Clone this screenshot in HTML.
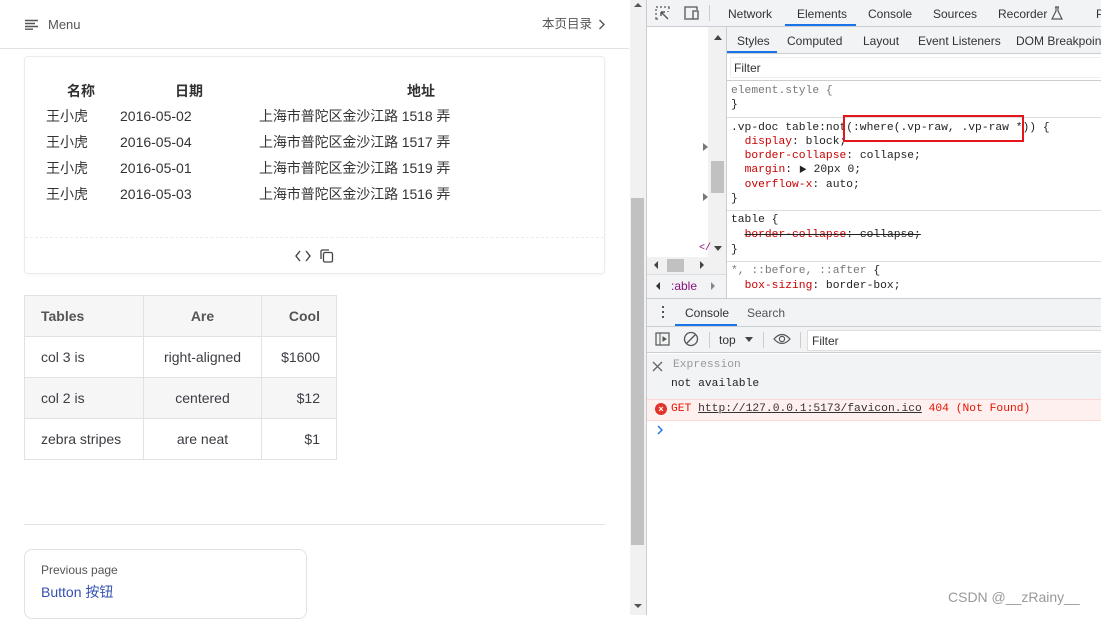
<!DOCTYPE html>
<html><head><meta charset="utf-8"><style>
*{box-sizing:border-box;margin:0;padding:0}
body{width:1101px;height:615px;overflow:hidden;background:#fff;position:relative;font-family:"Liberation Sans","Noto Sans CJK SC",sans-serif;color:#3c3c43}
.a{position:absolute;white-space:nowrap}
.m{font-family:"Liberation Mono","Noto Sans CJK SC",monospace;font-size:11.3px}
.dt{font-family:"Liberation Sans",sans-serif;font-size:12px;color:#333}
td{border:1px solid #e2e2e3;font-size:14px;padding:0 16px;height:41px}
.g{background:#f6f6f7}
</style></head><body>
<!-- header -->
<svg class="a" style="left:25px;top:19px" width="13" height="11"><path d="M0 1.5H13M0 4.5H10M0 7.5H13M0 10.2H8" stroke="#555" stroke-width="1.4"/></svg>
<div class="a" style="left:48px;top:17px;font-size:13px;color:#555">Menu</div>
<div class="a" style="left:542px;top:16px;font-size:12.5px;color:#555;line-height:16px">本页目录</div>
<svg class="a" style="left:598px;top:19px" width="8" height="12"><path d="M1.5 1L6 5.5 1.5 10" stroke="#555" stroke-width="1.4" fill="none"/></svg>
<div class="a" style="left:0;top:48px;width:629px;height:1px;background:#e2e2e3"></div>
<!-- card -->
<div class="a" style="left:24px;top:56px;width:581px;height:218px;border:1px solid #ebebeb;border-radius:4px;box-shadow:0 1px 2px rgba(0,0,0,.04)"></div>
<div class="a" style="left:25px;top:237px;width:579px;border-top:1px dashed #ececec"></div>
<div class="a" style="left:67px;top:81px;font-size:14px;font-weight:bold;color:#303133">名称</div>
<div class="a" style="left:175px;top:81px;font-size:14px;font-weight:bold;color:#303133">日期</div>
<div class="a" style="left:407px;top:81px;font-size:14px;font-weight:bold;color:#303133">地址</div>
<div class="a" style="left:46px;top:103px;font-size:14px;line-height:26px;color:#333">王小虎<br>王小虎<br>王小虎<br>王小虎</div>
<div class="a" style="left:120px;top:103px;font-size:14px;line-height:26px;color:#333">2016-05-02<br>2016-05-04<br>2016-05-01<br>2016-05-03</div>
<div class="a" style="left:259px;top:103px;font-size:14px;line-height:26px;color:#333;letter-spacing:-0.1px">上海市普陀区金沙江路 1518 弄<br>上海市普陀区金沙江路 1517 弄<br>上海市普陀区金沙江路 1519 弄<br>上海市普陀区金沙江路 1516 弄</div>
<svg class="a" style="left:295px;top:250px" width="16" height="12"><path d="M5 1L1 6 5 11M11 1L15 6 11 11" stroke="#444" stroke-width="1.4" fill="none"/></svg>
<svg class="a" style="left:320px;top:249px" width="14" height="14"><rect x="3.5" y="3.5" width="9" height="9.5" rx="1.5" stroke="#444" stroke-width="1.3" fill="none"/><path d="M1 10V2.5Q1 1 2.5 1H9" stroke="#444" stroke-width="1.3" fill="none"/></svg>
<!-- md table -->
<table class="a" style="left:24px;top:295px;border-collapse:collapse">
<tr class="g"><td style="width:119px;font-weight:600;color:#555">Tables</td><td style="width:118px;text-align:center;font-weight:600;color:#555">Are</td><td style="width:75px;text-align:right;font-weight:600;color:#555">Cool</td></tr>
<tr><td>col 3 is</td><td style="text-align:center">right-aligned</td><td style="text-align:right">$1600</td></tr>
<tr class="g"><td>col 2 is</td><td style="text-align:center">centered</td><td style="text-align:right">$12</td></tr>
<tr><td>zebra stripes</td><td style="text-align:center">are neat</td><td style="text-align:right">$1</td></tr>
</table>
<div class="a" style="left:24px;top:524px;width:581px;height:1px;background:#e2e2e3"></div>
<div class="a" style="left:24px;top:549px;width:283px;height:70px;border:1px solid #e2e2e3;border-radius:8px"></div>
<div class="a" style="left:41px;top:563px;font-size:12px;color:#555">Previous page</div>
<div class="a" style="left:41px;top:582px;font-size:14px;color:#3451b2">Button 按钮</div>
<!-- page scrollbar -->
<div class="a" style="left:630px;top:0;width:16px;height:615px;background:#f1f1f1"></div>
<div class="a" style="left:631px;top:198px;width:13px;height:347px;background:#c1c1c1"></div>
<div class="a" style="left:634px;top:3px;width:0;height:0;border:4px solid transparent;border-bottom:4px solid #555;border-top:0"></div>
<div class="a" style="left:634px;top:604px;width:0;height:0;border:4px solid transparent;border-top:4px solid #555;border-bottom:0"></div>
<!-- devtools -->
<div class="a" style="left:646px;top:0;width:1px;height:615px;background:#ccc"></div>
<div class="a" style="left:647px;top:0;width:454px;height:27px;background:#f1f3f4;border-bottom:1px solid #cacdd1"></div>
<svg class="a" style="left:655px;top:6px" width="16" height="15"><path d="M1 1h2M5 1h2M9 1h2M13 1h1v2M1 3v2M1 7v2M1 11v2h2M13 5v1" stroke="#555" stroke-width="1.2" fill="none"/><path d="M6 6l7 7M6 6h4M6 6v4" stroke="#555" stroke-width="1.4" fill="none"/></svg>
<svg class="a" style="left:683px;top:6px" width="17" height="14"><path d="M1 13h9M2 12V1h12v3" stroke="#555" stroke-width="1.3" fill="none"/><rect x="10" y="5" width="5" height="8" stroke="#555" stroke-width="1.3" fill="none"/></svg>
<div class="a" style="left:709px;top:5px;width:1px;height:16px;background:#ccc"></div>
<div class="a dt" style="left:728px;top:7px">Network</div>
<div class="a dt" style="left:797px;top:7px">Elements</div>
<div class="a" style="left:785px;top:24px;width:71px;height:2px;background:#1a73e8"></div>
<div class="a dt" style="left:868px;top:7px">Console</div>
<div class="a dt" style="left:933px;top:7px">Sources</div>
<div class="a dt" style="left:998px;top:7px">Recorder</div>
<svg class="a" style="left:1051px;top:6px" width="12" height="14"><path d="M4 1h4M5 1v4L1 13h10L7 5V1" stroke="#555" stroke-width="1.2" fill="none"/></svg>
<div class="a dt" style="left:1096px;top:7px">P</div>
<!-- elements left -->
<div class="a" style="left:708px;top:27px;width:18px;height:230px;background:#f1f1f1"></div>
<div class="a" style="left:711px;top:161px;width:13px;height:32px;background:#c1c1c1"></div>
<div class="a" style="left:714px;top:35px;border:4px solid transparent;border-bottom:5px solid #444;border-top:0"></div>
<div class="a" style="left:714px;top:246px;border:4px solid transparent;border-top:5px solid #444;border-bottom:0"></div>
<div class="a" style="left:703px;top:143px;border:4px solid transparent;border-left:5px solid #777;border-right:0"></div>
<div class="a" style="left:703px;top:193px;border:4px solid transparent;border-left:5px solid #777;border-right:0"></div>
<div class="a m" style="left:699px;top:243px;color:#881280;font-size:10px">&lt;/</div>
<div class="a" style="left:647px;top:257px;width:80px;height:17px;background:#f1f1f1"></div>
<div class="a" style="left:667px;top:259px;width:17px;height:13px;background:#c1c1c1"></div>
<div class="a" style="left:654px;top:261px;border:4px solid transparent;border-right:4px solid #444;border-left:0"></div>
<div class="a" style="left:700px;top:261px;border:4px solid transparent;border-left:4px solid #444;border-right:0"></div>
<div class="a" style="left:647px;top:274px;width:80px;height:24px;background:#f1f3f4;border-top:1px solid #ddd"></div>
<div class="a" style="left:656px;top:282px;border:4px solid transparent;border-right:4px solid #333;border-left:0"></div>
<div class="a" style="left:671px;top:279px;font-size:12px;color:#881280">:able</div>
<div class="a" style="left:711px;top:282px;border:4px solid transparent;border-left:4px solid #888;border-right:0"></div>
<div class="a" style="left:726px;top:27px;width:1px;height:271px;background:#cacdd1"></div>
<!-- styles pane -->
<div class="a" style="left:727px;top:27px;width:374px;height:27px;background:#f1f3f4;border-bottom:1px solid #cacdd1"></div>
<div class="a dt" style="left:737px;top:34px">Styles</div>
<div class="a" style="left:727px;top:51px;width:50px;height:2px;background:#1a73e8"></div>
<div class="a dt" style="left:787px;top:34px">Computed</div>
<div class="a dt" style="left:863px;top:34px">Layout</div>
<div class="a dt" style="left:918px;top:34px">Event Listeners</div>
<div class="a dt" style="left:1016px;top:34px">DOM Breakpoints</div>
<div class="a" style="left:730px;top:57px;width:371px;height:21px;border:1px solid #eee;border-right:0"></div>
<div class="a dt" style="left:734px;top:61px">Filter</div>
<div class="a" style="left:727px;top:80px;width:374px;height:1px;background:#cacdd1"></div>
<div class="a m" style="left:731px;top:84px;line-height:14px;color:#777">element.style {<br><span style="color:#222">}</span></div>
<div class="a" style="left:727px;top:117px;width:374px;height:1px;background:#ddd"></div>
<div class="a m" style="left:731px;top:121px;line-height:14px;color:#222">.vp-doc table:not(:where(.vp-raw, .vp-raw *)) {<br>&nbsp;&nbsp;<span style="color:#c80000">display</span>: block;<br>&nbsp;&nbsp;<span style="color:#c80000">border-collapse</span>: collapse;<br>&nbsp;&nbsp;<span style="color:#c80000">margin</span>: <span style="font-size:8px">▶</span> 20px 0;<br>&nbsp;&nbsp;<span style="color:#c80000">overflow-x</span>: auto;<br>}</div>
<div class="a" style="left:843px;top:115px;width:181px;height:27px;border:2px solid #e4161c"></div>
<div class="a" style="left:727px;top:210px;width:374px;height:1px;background:#ddd"></div>
<div class="a m" style="left:731px;top:213px;line-height:15px;color:#222">table {<br>&nbsp;&nbsp;<s><span style="color:#c80000">border-collapse</span>: collapse;</s><br>}</div>
<div class="a" style="left:727px;top:261px;width:374px;height:1px;background:#ddd"></div>
<div class="a m" style="left:731px;top:264px;line-height:15px;color:#222"><span style="color:#777">*, ::before, ::after</span> {<br>&nbsp;&nbsp;<span style="color:#c80000">box-sizing</span>: border-box;</div>
<!-- drawer -->
<div class="a" style="left:647px;top:298px;width:454px;height:29px;background:#f1f3f4;border-top:1px solid #cacdd1;border-bottom:1px solid #cacdd1"></div>
<div class="a" style="left:662px;top:306px;width:2px;height:2px;background:#555;box-shadow:0 5px #555,0 10px #555"></div>
<div class="a dt" style="left:685px;top:306px">Console</div>
<div class="a" style="left:675px;top:324px;width:62px;height:2px;background:#1a73e8"></div>
<div class="a dt" style="left:747px;top:306px;color:#555">Search</div>
<div class="a" style="left:647px;top:327px;width:454px;height:26px;background:#f1f3f4;border-bottom:1px solid #cacdd1"></div>
<svg class="a" style="left:655px;top:332px" width="15" height="14"><rect x="1" y="1" width="13" height="12" stroke="#555" stroke-width="1.2" fill="none"/><path d="M5 1v12M8 5l3 2-3 2z" stroke="#555" fill="#555"/></svg>
<svg class="a" style="left:683px;top:331px" width="16" height="16"><circle cx="8" cy="8" r="6.5" stroke="#555" stroke-width="1.3" fill="none"/><path d="M3.5 12.5L12.5 3.5" stroke="#555" stroke-width="1.3"/></svg>
<div class="a" style="left:709px;top:332px;width:1px;height:16px;background:#ccc"></div>
<div class="a dt" style="left:719px;top:333px">top</div>
<div class="a" style="left:745px;top:337px;border:4px solid transparent;border-top:5px solid #444;border-bottom:0"></div>
<div class="a" style="left:763px;top:332px;width:1px;height:16px;background:#ccc"></div>
<svg class="a" style="left:773px;top:333px" width="18" height="12"><path d="M1 6Q9 -3 17 6Q9 15 1 6z" stroke="#555" stroke-width="1.2" fill="none"/><circle cx="9" cy="6" r="2.6" stroke="#555" stroke-width="1.2" fill="none"/></svg>
<div class="a" style="left:800px;top:332px;width:1px;height:16px;background:#ccc"></div>
<div class="a" style="left:807px;top:330px;width:294px;height:21px;background:#fff;border:1px solid #ddd;border-right:0"></div>
<div class="a dt" style="left:812px;top:334px">Filter</div>
<div class="a" style="left:647px;top:354px;width:454px;height:45px;background:#f1f3f4"></div>
<svg class="a" style="left:652px;top:361px" width="11" height="11"><path d="M1 1l9 9M10 1l-9 9" stroke="#666" stroke-width="1.3"/></svg>
<div class="a m" style="left:673px;top:359px;color:#999">Expression</div>
<div class="a m" style="left:671px;top:378px;color:#222">not available</div>
<div class="a" style="left:647px;top:399px;width:454px;height:22px;background:#fff0f0;border-top:1px solid #ffd6d6;border-bottom:1px solid #ffd6d6"></div>
<div class="a" style="left:655px;top:403px;width:12px;height:12px;border-radius:50%;background:#e0332b;color:#fff;font-size:9px;line-height:12px;text-align:center;font-weight:bold">×</div>
<div class="a m" style="left:671px;top:403px;color:#e51400">GET <span style="color:#333;text-decoration:underline">http://127.0.0.1:5173/favicon.ico</span> 404 (Not Found)</div>
<svg class="a" style="left:657px;top:425px" width="7" height="10"><path d="M1 1l4 4-4 4" stroke="#1a73e8" stroke-width="1.4" fill="none"/></svg>
<div class="a" style="left:948px;top:589px;font-size:14px;color:#999">CSDN @__zRainy__</div>
</body></html>
